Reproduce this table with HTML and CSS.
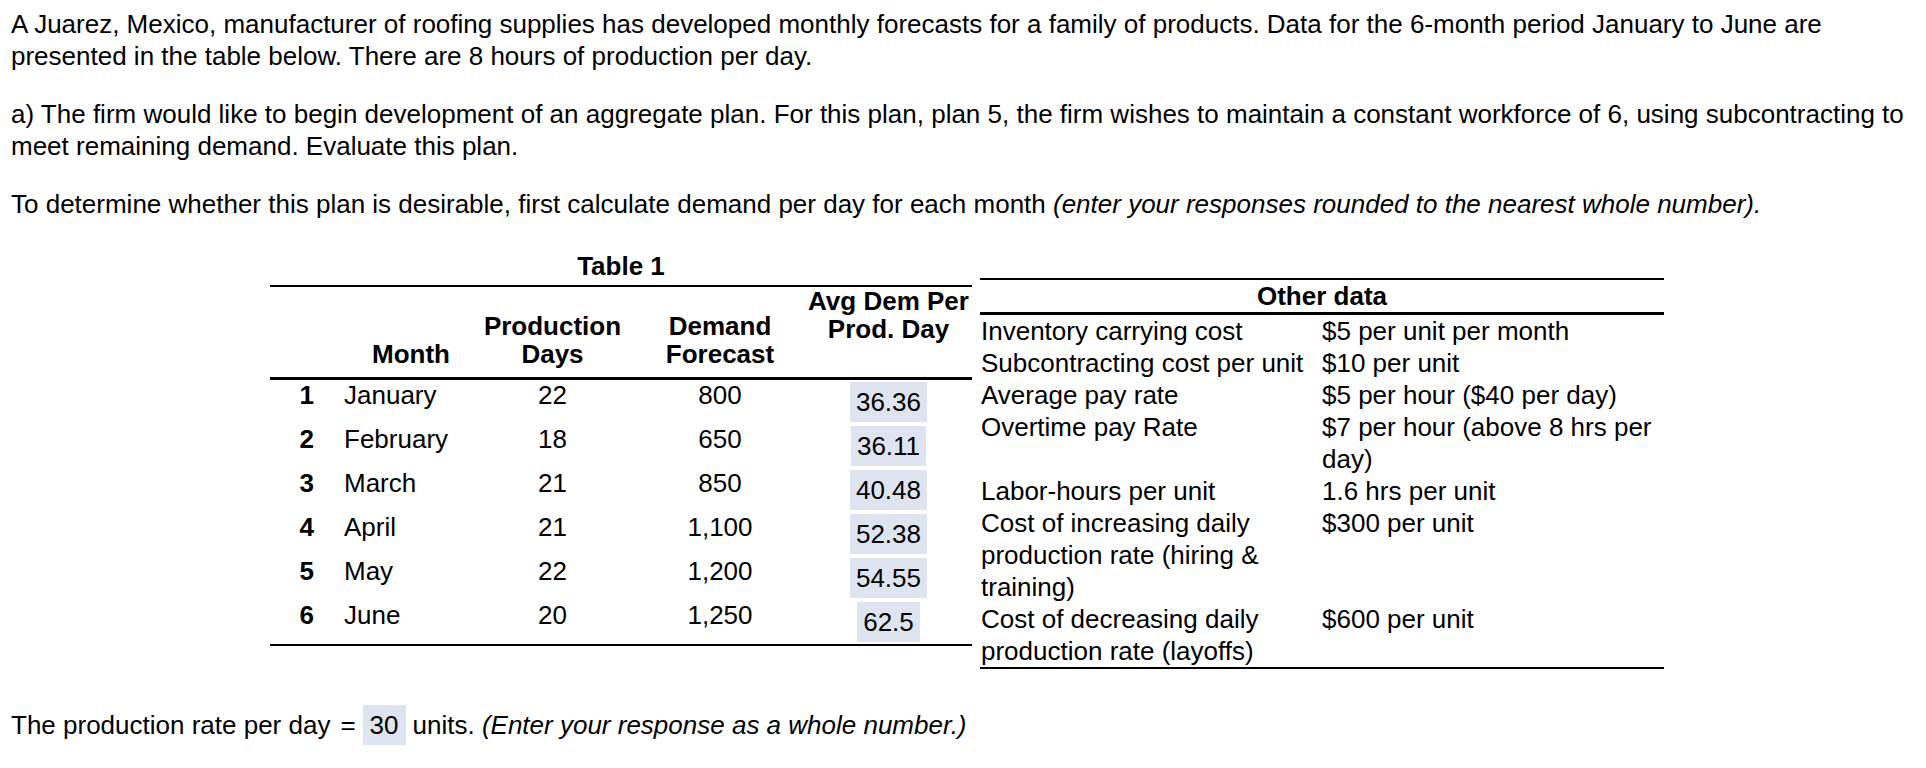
FILE: index.html
```html
<!DOCTYPE html>
<html lang="en">
<head>
<meta charset="utf-8">
<title>Aggregate plan</title>
<link rel="stylesheet" href="styles.css">
</head>
<body>
<p class="para">A Juarez, Mexico, manufacturer of roofing supplies has developed monthly forecasts for a family of products. Data for the 6-month period January to June are presented in the table below. There are 8 hours of production per day.</p>
<p class="para">a) The firm would like to begin development of an aggregate plan. For this plan, plan 5, the firm wishes to maintain a constant workforce of 6, using subcontracting to meet remaining demand. Evaluate this plan.</p>
<p class="para">To determine whether this plan is desirable, first calculate demand per day for each month <i>(enter your responses rounded to the nearest whole number).</i></p>

<div class="tables">
  <div class="table1">
    <div class="caption">Table 1</div>
    <table class="t1">
      <colgroup>
        <col class="c-num"><col class="c-month"><col class="c-days"><col class="c-dem"><col class="c-avg">
      </colgroup>
      <thead>
        <tr>
          <th></th>
          <th class="month">Month</th>
          <th>Production<br>Days</th>
          <th>Demand<br>Forecast</th>
          <th class="avg">Avg Dem Per<br>Prod. Day</th>
        </tr>
      </thead>
      <tbody>
        <tr><td class="num">1</td><td class="month">January</td><td>22</td><td>800</td><td class="avg"><span class="ans">36.36</span></td></tr>
        <tr><td class="num">2</td><td class="month">February</td><td>18</td><td>650</td><td class="avg"><span class="ans">36.11</span></td></tr>
        <tr><td class="num">3</td><td class="month">March</td><td>21</td><td>850</td><td class="avg"><span class="ans">40.48</span></td></tr>
        <tr><td class="num">4</td><td class="month">April</td><td>21</td><td>1,100</td><td class="avg"><span class="ans">52.38</span></td></tr>
        <tr><td class="num">5</td><td class="month">May</td><td>22</td><td>1,200</td><td class="avg"><span class="ans">54.55</span></td></tr>
        <tr><td class="num">6</td><td class="month">June</td><td>20</td><td>1,250</td><td class="avg"><span class="ans">62.5</span></td></tr>
      </tbody>
    </table>
  </div>

  <table class="other">
    <colgroup><col class="c-lbl"><col class="c-val"></colgroup>
    <thead>
      <tr><th colspan="2">Other data</th></tr>
    </thead>
    <tbody>
      <tr><td class="lbl">Inventory carrying cost</td><td>$5 per unit per month</td></tr>
      <tr><td class="lbl">Subcontracting cost per unit</td><td>$10 per unit</td></tr>
      <tr><td class="lbl">Average pay rate</td><td>$5 per hour ($40 per day)</td></tr>
      <tr><td class="lbl">Overtime pay Rate</td><td>$7 per hour (above 8 hrs per day)</td></tr>
      <tr><td class="lbl">Labor-hours per unit</td><td>1.6 hrs per unit</td></tr>
      <tr><td class="lbl">Cost of increasing daily production rate (hiring &amp; training)</td><td>$300 per unit</td></tr>
      <tr><td class="lbl">Cost of decreasing daily production rate (layoffs)</td><td>$600 per unit</td></tr>
    </tbody>
  </table>
</div>

<p class="rate">The production rate per day<span class="eq">=</span><span class="ans-inline">30</span>units. <i>(Enter your response as a whole number.)</i></p>
</body>
</html>
```

FILE: styles.css
```css
html, body {
  margin: 0;
}

body {
  padding: 8px 8px 0 11px;
  font-family: "Liberation Sans", Arial, sans-serif;
  font-size: 26px;
  line-height: 32px;
  color: #000;
  background: #fff;
}

.para {
  margin: 0 0 26px;
}

/* ---------- tables row ---------- */
.tables {
  display: flex;
  align-items: flex-start;
  margin: 32px 0 0 259px;
}

.table1 {
  width: 702px;
}

.caption {
  font-weight: bold;
  text-align: center;
  line-height: 28px;
  padding-bottom: 5px;
}

.t1 {
  width: 702px;
  table-layout: fixed;
  border-collapse: separate;
  border-spacing: 0;
  border-top: 2px solid #000;
  border-bottom: 2px solid #000;
  line-height: 28px;
}

.c-num { width: 60px; }
.c-month { width: 140px; }
.c-days { width: 165px; }
.c-dem { width: 170px; }
.c-avg { width: 167px; }

.t1 th {
  padding: 0 0 9px;
  vertical-align: bottom;
  border-bottom: 3px solid #000;
  font-weight: bold;
  text-align: center;
  white-space: nowrap;
}

.t1 th.month {
  text-align: right;
  padding-right: 20px;
}

.t1 th.avg {
  vertical-align: top;
  padding-bottom: 34px;
}

.t1 td {
  padding: 1px 0 0;
  vertical-align: top;
  text-align: center;
  white-space: nowrap;
}

.t1 td.num {
  font-weight: bold;
  text-align: right;
  padding-right: 16px;
}

.t1 td.month {
  text-align: left;
  padding-left: 14px;
}

.t1 td.avg {
  padding: 2px 0;
}

.ans {
  display: inline-block;
  vertical-align: top;
  padding: 6px 6px;
  line-height: 28px;
  background: #dde3ef;
}

/* ---------- other data ---------- */
.other {
  width: 684px;
  margin: 26px 0 0 8px;
  table-layout: fixed;
  border-collapse: separate;
  border-spacing: 0;
  border-top: 2px solid #000;
  border-bottom: 2px solid #000;
  line-height: 32px;
}

.c-lbl { width: 342px; }
.c-val { width: 342px; }

.other th {
  padding: 0;
  font-weight: bold;
  text-align: center;
  border-bottom: 3px solid #000;
}

.other td {
  padding: 0;
  vertical-align: top;
  text-align: left;
}

.other td.lbl {
  padding-left: 1px;
}

/* ---------- final line ---------- */
.rate {
  margin: 36px 0 0;
}

.eq {
  margin: 0 7px 0 10px;
}

.ans-inline {
  display: inline-block;
  padding: 4px 7px;
  margin-right: 7px;
  line-height: 32px;
  background: #dde3ef;
}
```
